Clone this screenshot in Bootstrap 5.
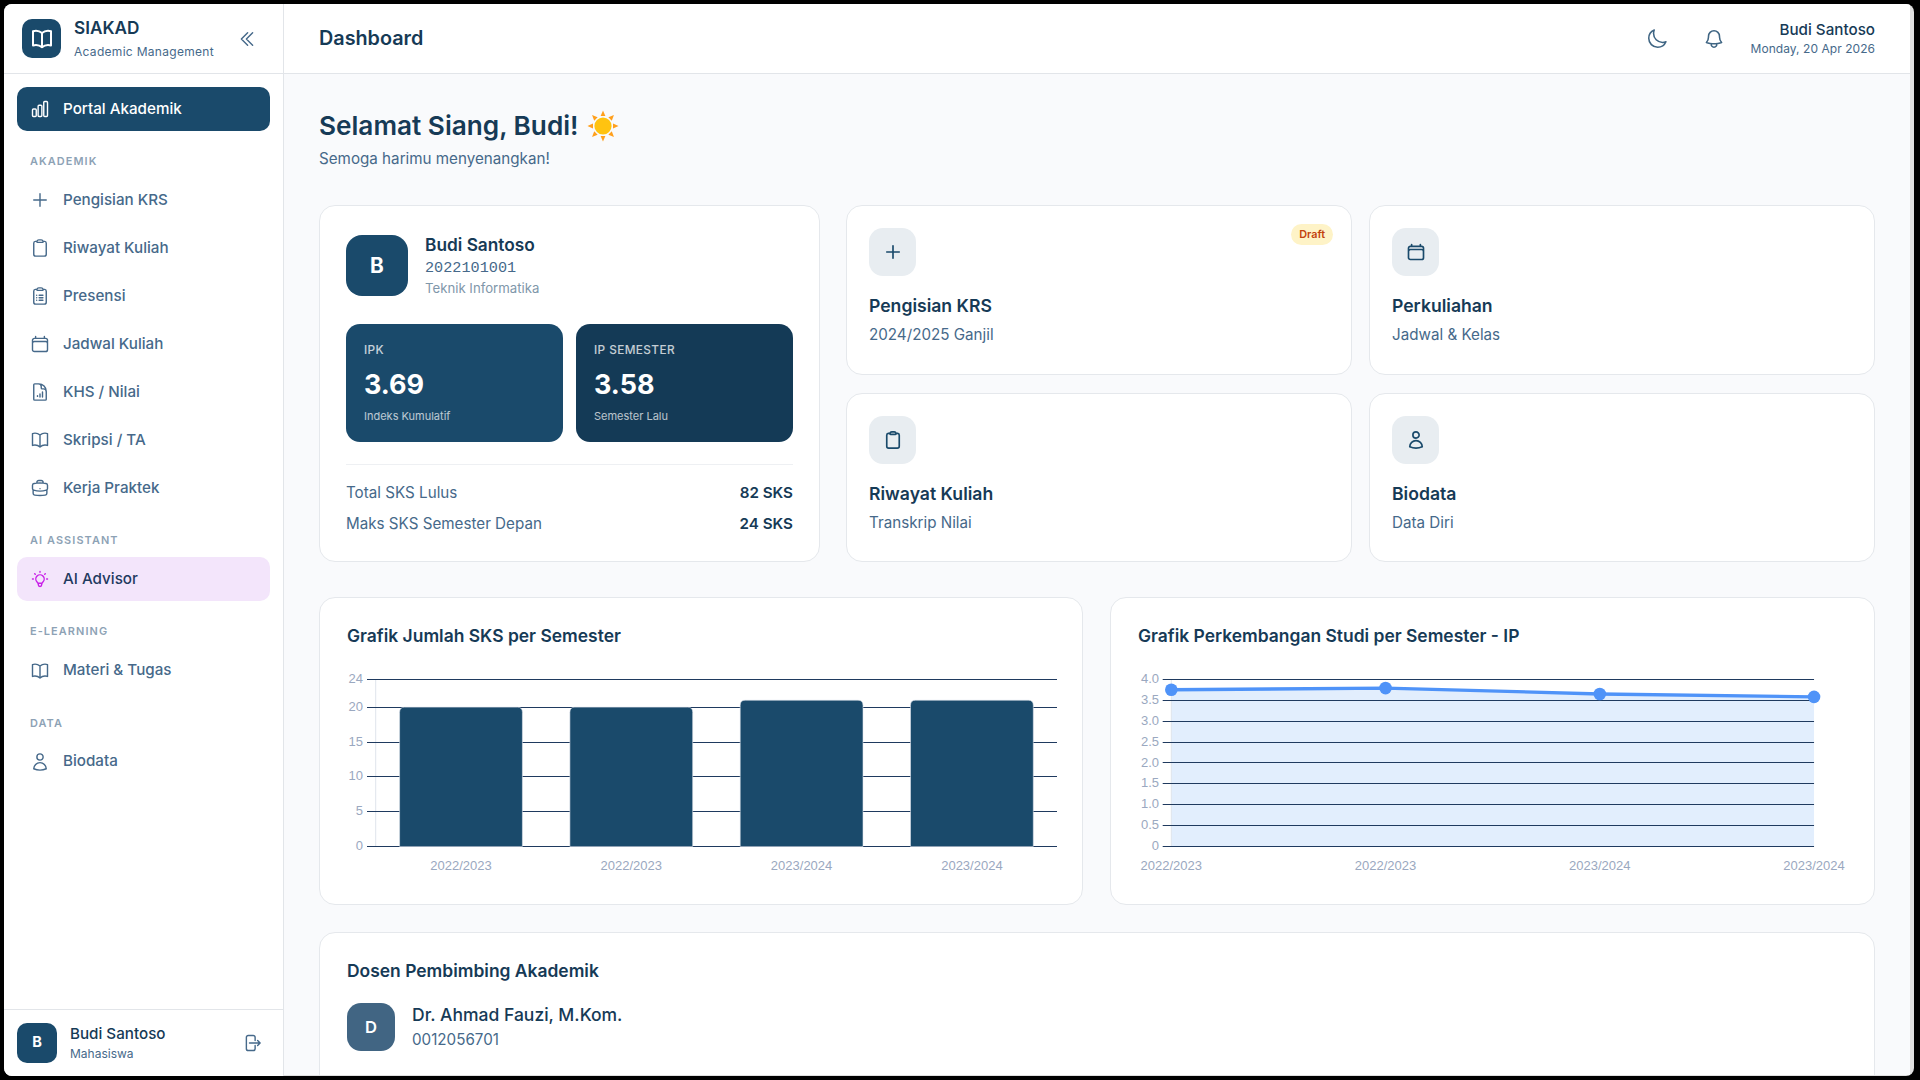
<!DOCTYPE html>
<html lang="en">
<head>
    <meta charset="UTF-8">
    <meta name="viewport" content="width=device-width, initial-scale=1.0">
    <title>SIAKAD - Dashboard</title>
    <link href="https://cdn.jsdelivr.net/npm/bootstrap@5.3.0/dist/css/bootstrap.min.css" rel="stylesheet">
    <style>
        html, body { height: 100%; }
        body {
            background: #000;
            padding: 4px;
            overflow: hidden;
            font-family: Inter, "Liberation Sans", sans-serif;
            color: #163a56;
        }
        .app-window {
            width: 1910px;
            height: 1072px;
            background: #e0e0e0;
            border-radius: 8px;
            overflow: hidden;
            padding-right: 4px;
        }
        .ico { width: 20px; height: 20px; fill: none; stroke: currentColor; stroke-width: 1.7; stroke-linecap: round; stroke-linejoin: round; flex: none; }

        /* sidebar */
        .side { width: 280px; background: #fff; border-right: 1px solid #e2e5e9; flex: none; }
        .side-brand { height: 70px; padding: 0 18px; border-bottom: 1px solid #e2e5e9; gap: 13px; }
        .logo-box { width: 39px; height: 39px; border-radius: 10px; background: #1a4a6b; color: #fff; }
        .logo-box .ico { width: 24px; height: 24px; stroke-width: 2; }
        .brand-name { font-size: 17.2px; font-weight: 600; line-height: 22px; }
        .brand-sub { font-size: 12px; line-height: 16px; color: #46698a; letter-spacing: .3px; margin-top: 5px; }
        .collapse-btn { color: #46698a; margin-left: auto; margin-right: 8px; }
        .side-nav { padding: 13px 13px 0; }
        .side-link {
            height: 44px;
            margin-bottom: 4px;
            padding: 0 13px;
            gap: 13px;
            border-radius: 10px;
            font-size: 15.2px;
            font-weight: 500;
            color: #46698a;
            text-decoration: none;
        }
        .side-link.on { background: #1a4a6b; color: #fff; }
        .side-link.ai { background: #f3e5fb; color: #1f3a5f; }
        .side-link.ai .ico { color: #c81ee8; }
        .side-label {
            padding: 17px 13px 0;
            margin-bottom: 8.2px;
            line-height: 18px;
            font-size: 10.9px;
            font-weight: 600;
            letter-spacing: 1.1px;
            color: #8da2b5;
        }
        .side-foot { height: 67px; border-top: 1px solid #e2e5e9; padding: 0 13px; gap: 13px; }
        .foot-avatar { width: 40px; height: 40px; border-radius: 10px; background: #1a4a6b; color: #fff; font-size: 14.6px; font-weight: 700; }
        .foot-name { font-size: 15.2px; font-weight: 500; line-height: 20px; }
        .foot-role { font-size: 12px; line-height: 16px; color: #46698a; margin-top: 2px; }
        .foot-out { color: #46698a; margin-left: auto; margin-right: 8px; }

        /* top bar */
        .top-bar { height: 70px; background: #fff; border-bottom: 1px solid #e2e5e9; padding: 0 35px; flex: none; }
        .top-title { font-size: 19.8px; font-weight: 600; margin: 0; }
        .top-ico { width: 22px; height: 22px; color: #3f6583; }
        .top-ico.moon-ico { margin-right: 35px; }
        .top-ico.bell-ico { margin-right: 26px; }
        .top-name { font-size: 15.2px; font-weight: 500; line-height: 20px; margin-bottom: 1px; }
        .top-date { font-size: 12px; line-height: 16px; color: #46698a; letter-spacing: .05px; }

        /* content */
        .page-body { background: #f9fafc; padding: 36px 35px 0; margin-bottom: 1px; overflow: hidden; min-height: 0; }
        .hello { font-size: 26.2px; font-weight: 600; line-height: 32px; margin: 0; gap: 8px; }
        .hello svg { width: 32px; height: 32px; flex: none; }
        .hello-sub { font-size: 15.2px; line-height: 20px; color: #46698a; margin: 7px 0 36px; }
        .panel { border: 1px solid #e5e8ec; border-radius: 16px; background: #fff; color: #163a56; }
        .top-grid { display: grid; grid-template-columns: 501px 1fr; column-gap: 26px; height: 357px; margin-bottom: 35px; }
        .quick-grid { display: grid; grid-template-columns: 1fr 1fr; gap: 18px 17px; }
        .profile-panel { padding: 28px 26px 0; }
        .profile-head { gap: 17px; }
        .big-avatar { width: 62px; height: 61px; border-radius: 16px; background: #1a4a6b; color: #fff; font-size: 20.8px; font-weight: 700; flex: none; }
        .pr-name { font-size: 17.3px; font-weight: 600; line-height: 22px; }
        .pr-nim { font-family: "Liberation Mono", monospace; font-size: 15.2px; line-height: 20px; color: #46698a; margin-top: 2px; }
        .pr-prodi { font-size: 13.2px; line-height: 18px; color: #7f97aa; margin-top: 1px; }
        .stat-row { display: grid; grid-template-columns: 1fr 1fr; gap: 13px; margin: 27px 0 22px; }
        .stat-box { height: 118px; border-radius: 14px; background: #1a4a6b; color: #fff; padding: 17px 18px; }
        .stat-box.dark { background: #143a56; }
        .stat-label { font-size: 11.8px; font-weight: 500; line-height: 18px; letter-spacing: .4px; opacity: .75; }
        .stat-value { font-size: 27px; font-weight: 700; line-height: 36px; margin-top: 8px; }
        .stat-note { font-size: 11px; line-height: 14px; opacity: .7; margin-top: 6px; }
        .sum-row { font-size: 15.2px; line-height: 20px; color: #46698a; margin-bottom: 11px; }
        .sum-row b { font-weight: 600; color: #163a56; }
        .sum-list { border-top: 1px solid #eef0f3; padding-top: 18px; }
        .quick { padding: 22px 22px 0; height: auto; }
        .quick-ico { width: 47px; height: 48px; border-radius: 14px; background: #e8edf1; color: #1a4a6b; }
        .quick-ico .ico { stroke-width: 2; }
        .quick-title { font-size: 17.6px; font-weight: 600; line-height: 24px; margin-top: 18px; }
        .quick-sub { font-size: 15.2px; line-height: 20px; color: #46698a; margin-top: 7px; }
        .draft-tag { top: 18px; right: 18px; height: 21px; padding: 0 8px; border-radius: 11px; background: #fef3c7; color: #c2410c; font-size: 10.8px; font-weight: 600; line-height: 21px; }
        .chart-grid { display: grid; grid-template-columns: 764px 1fr; column-gap: 27px; margin-bottom: 27px; }
        .chart-panel { height: 308px; padding: 26px 25px 26px 27px; }
        .panel-title { font-size: 17.45px; font-weight: 600; line-height: 24px; margin: 0 0 24px; }
        .chart-text { font-family: "Liberation Sans", Arial, sans-serif; font-size: 13px; fill: #9aa8c0; }
        .dosen-panel { padding: 26px 27px; height: 200px; }
        .dosen-panel .panel-title { margin-bottom: 20px; }
        .dosen-avatar { width: 48px; height: 48px; border-radius: 14px; background: #416583; color: #fff; font-size: 16.6px; font-weight: 600; flex: none; }
        .dosen-name { font-size: 17.5px; font-weight: 500; line-height: 22px; }
        .dosen-nip { font-size: 15.2px; line-height: 20px; color: #46698a; margin-top: 4px; }
    </style>
</head>
<body>
    <!-- icon sprite -->
    <svg width="0" height="0" class="position-absolute">
        <symbol id="i-book" viewBox="0 0 24 24"><path d="M12 6.042A8.967 8.967 0 0 0 6 3.75c-1.052 0-2.062.18-3 .512v14.25A8.987 8.987 0 0 1 6 18c2.305 0 4.408.867 6 2.292m0-14.25a8.966 8.966 0 0 1 6-2.292c1.052 0 2.062.18 3 .512v14.25A8.987 8.987 0 0 0 18 18a8.967 8.967 0 0 0-6 2.292m0-14.25v14.25"/></symbol>
        <symbol id="i-chevrons" viewBox="0 0 24 24"><path d="m18.75 4.5-7.5 7.5 7.5 7.5m-6-15L5.25 12l7.5 7.5"/></symbol>
        <symbol id="i-bars" viewBox="0 0 24 24"><path d="M3 13.125C3 12.504 3.504 12 4.125 12h2.25c.621 0 1.125.504 1.125 1.125v6.75C7.5 20.496 6.996 21 6.375 21h-2.25A1.125 1.125 0 0 1 3 19.875v-6.75ZM9.75 8.625c0-.621.504-1.125 1.125-1.125h2.25c.621 0 1.125.504 1.125 1.125v11.25c0 .621-.504 1.125-1.125 1.125h-2.25a1.125 1.125 0 0 1-1.125-1.125V8.625ZM16.5 4.125c0-.621.504-1.125 1.125-1.125h2.25C20.496 3 21 3.504 21 4.125v15.75c0 .621-.504 1.125-1.125 1.125h-2.25a1.125 1.125 0 0 1-1.125-1.125V4.125Z"/></symbol>
        <symbol id="i-plus" viewBox="0 0 24 24"><path d="M12 4.5v15m7.5-7.5h-15"/></symbol>
        <symbol id="i-clip" viewBox="0 0 24 24"><path d="M15.666 3.888A2.25 2.25 0 0 0 13.5 2.25h-3c-1.03 0-1.9.693-2.166 1.638m7.332 0c.055.194.084.4.084.612v0a.75.75 0 0 1-.75.75H9a.75.75 0 0 1-.75-.75v0c0-.212.03-.418.084-.612m7.332 0c.646.049 1.288.11 1.927.184 1.1.128 1.907 1.077 1.907 2.185V19.5a2.25 2.25 0 0 1-2.25 2.25H6.75A2.25 2.25 0 0 1 4.5 19.5V6.257c0-1.108.806-2.057 1.907-2.185a48.208 48.208 0 0 1 1.927-.184"/></symbol>
        <symbol id="i-cliplist" viewBox="0 0 24 24"><path d="M15.666 3.888A2.25 2.25 0 0 0 13.5 2.25h-3c-1.03 0-1.9.693-2.166 1.638m7.332 0c.055.194.084.4.084.612v0a.75.75 0 0 1-.75.75H9a.75.75 0 0 1-.75-.75v0c0-.212.03-.418.084-.612m7.332 0c.646.049 1.288.11 1.927.184 1.1.128 1.907 1.077 1.907 2.185V19.5a2.25 2.25 0 0 1-2.25 2.25H6.75A2.25 2.25 0 0 1 4.5 19.5V6.257c0-1.108.806-2.057 1.907-2.185a48.208 48.208 0 0 1 1.927-.184M11 11h4.5M11 14h4.5M11 17h4.5M8 11h.01M8 14h.01M8 17h.01"/></symbol>
        <symbol id="i-cal" viewBox="0 0 24 24"><path d="M6.75 3v2.25M17.25 3v2.25M3 18.75V7.5a2.25 2.25 0 0 1 2.25-2.25h13.5A2.25 2.25 0 0 1 21 7.5v11.25m-18 0A2.25 2.25 0 0 0 5.25 21h13.5A2.25 2.25 0 0 0 21 18.75m-18 0v-7.5A2.25 2.25 0 0 1 5.25 9h13.5A2.25 2.25 0 0 1 21 11.25v7.5"/></symbol>
        <symbol id="i-doc" viewBox="0 0 24 24"><path d="M19.5 14.25v-2.625a3.375 3.375 0 0 0-3.375-3.375h-1.5A1.125 1.125 0 0 1 13.5 7.125v-1.5a3.375 3.375 0 0 0-3.375-3.375H8.25M9 16.5v.75m3-3v3.75m3-6v6M10.5 2.25H5.625c-.621 0-1.125.504-1.125 1.125v17.25c0 .621.504 1.125 1.125 1.125h12.75c.621 0 1.125-.504 1.125-1.125V11.25a9 9 0 0 0-9-9Z"/></symbol>
        <symbol id="i-case" viewBox="0 0 24 24"><path d="M20.25 14.15v4.25c0 1.094-.787 2.036-1.872 2.18-2.087.277-4.216.42-6.378.42s-4.291-.143-6.378-.42c-1.085-.144-1.872-1.086-1.872-2.18v-4.25m16.5 0a2.18 2.18 0 0 0 .75-1.661V8.706c0-1.081-.768-2.015-1.837-2.175a48.114 48.114 0 0 0-3.413-.387m4.5 8.006c-.194.165-.42.295-.673.38A23.978 23.978 0 0 1 12 15.75c-2.648 0-5.195-.429-7.577-1.22a2.016 2.016 0 0 1-.673-.38m0 0A2.18 2.18 0 0 1 3 12.489V8.706c0-1.081.768-2.015 1.837-2.175a48.111 48.111 0 0 1 3.413-.387m7.5 0V5.25A2.25 2.25 0 0 0 13.5 3h-3a2.25 2.25 0 0 0-2.25 2.25v.894m7.5 0a48.667 48.667 0 0 0-7.5 0M12 12.75h.008v.008H12v-.008Z"/></symbol>
        <symbol id="i-bulb" viewBox="0 0 24 24"><path d="M9.663 17h4.673M12 3v1m6.364 1.636l-.707.707M21 12h-1M4 12H3m3.343-5.657l-.707-.707m2.828 9.9a5 5 0 117.072 0l-.548.547A3.374 3.374 0 0014 18.469V19a2 2 0 11-4 0v-.531c0-.895-.356-1.754-.988-2.386l-.548-.547z"/></symbol>
        <symbol id="i-user" viewBox="0 0 24 24"><path d="M15.75 6a3.75 3.75 0 1 1-7.5 0 3.75 3.75 0 0 1 7.5 0ZM4.501 20.118a7.5 7.5 0 0 1 14.998 0A17.933 17.933 0 0 1 12 21.75c-2.676 0-5.216-.584-7.499-1.632Z"/></symbol>
        <symbol id="i-out" viewBox="0 0 24 24"><path d="M15.75 9V5.25A2.25 2.25 0 0 0 13.5 3h-6a2.25 2.25 0 0 0-2.25 2.25v13.5A2.25 2.25 0 0 0 7.5 21h6a2.25 2.25 0 0 0 2.25-2.25V15m3 0 3-3m0 0-3-3m3 3H9"/></symbol>
        <symbol id="i-moon" viewBox="0 0 24 24"><path d="M21.752 15.002A9.72 9.72 0 0 1 18 15.75c-5.385 0-9.75-4.365-9.75-9.75 0-1.33.266-2.597.748-3.752A9.753 9.753 0 0 0 3 11.25C3 16.635 7.365 21 12.75 21a9.753 9.753 0 0 0 9.002-5.998Z"/></symbol>
        <symbol id="i-bell" viewBox="0 0 24 24"><path d="M14.857 17.082a23.848 23.848 0 0 0 5.454-1.31A8.967 8.967 0 0 1 18 9.75V9A6 6 0 0 0 6 9v.75a8.967 8.967 0 0 1-2.312 6.022c1.733.64 3.56 1.085 5.455 1.31m5.714 0a24.255 24.255 0 0 1-5.714 0m5.714 0a3 3 0 1 1-5.714 0"/></symbol>
    </svg>

    <div class="app-window d-flex">
        <aside class="side d-flex flex-column">
            <div class="side-brand d-flex align-items-center">
                <div class="logo-box d-flex align-items-center justify-content-center"><svg class="ico"><use href="#i-book"/></svg></div>
                <div>
                    <div class="brand-name">SIAKAD</div>
                    <div class="brand-sub">Academic Management</div>
                </div>
                <svg class="ico collapse-btn"><use href="#i-chevrons"/></svg>
            </div>
            <nav class="side-nav flex-grow-1">
                <a class="side-link on d-flex align-items-center" href="#"><svg class="ico"><use href="#i-bars"/></svg>Portal Akademik</a>
                <div class="side-label">AKADEMIK</div>
                <a class="side-link d-flex align-items-center" href="#"><svg class="ico"><use href="#i-plus"/></svg>Pengisian KRS</a>
                <a class="side-link d-flex align-items-center" href="#"><svg class="ico"><use href="#i-clip"/></svg>Riwayat Kuliah</a>
                <a class="side-link d-flex align-items-center" href="#"><svg class="ico"><use href="#i-cliplist"/></svg>Presensi</a>
                <a class="side-link d-flex align-items-center" href="#"><svg class="ico"><use href="#i-cal"/></svg>Jadwal Kuliah</a>
                <a class="side-link d-flex align-items-center" href="#"><svg class="ico"><use href="#i-doc"/></svg>KHS / Nilai</a>
                <a class="side-link d-flex align-items-center" href="#"><svg class="ico"><use href="#i-book"/></svg>Skripsi / TA</a>
                <a class="side-link d-flex align-items-center" href="#"><svg class="ico"><use href="#i-case"/></svg>Kerja Praktek</a>
                <div class="side-label">AI ASSISTANT</div>
                <a class="side-link ai d-flex align-items-center" href="#"><svg class="ico"><use href="#i-bulb"/></svg>AI Advisor</a>
                <div class="side-label">E-LEARNING</div>
                <a class="side-link d-flex align-items-center" href="#"><svg class="ico"><use href="#i-book"/></svg>Materi &amp; Tugas</a>
                <div class="side-label">DATA</div>
                <a class="side-link d-flex align-items-center" href="#"><svg class="ico"><use href="#i-user"/></svg>Biodata</a>
            </nav>
            <div class="side-foot d-flex align-items-center">
                <div class="foot-avatar d-flex align-items-center justify-content-center">B</div>
                <div>
                    <div class="foot-name">Budi Santoso</div>
                    <div class="foot-role">Mahasiswa</div>
                </div>
                <svg class="ico foot-out"><use href="#i-out"/></svg>
            </div>
        </aside>

        <div class="flex-grow-1 d-flex flex-column" style="min-width:0">
            <header class="top-bar d-flex align-items-center justify-content-between">
                <h1 class="top-title">Dashboard</h1>
                <div class="d-flex align-items-center">
                    <svg class="ico top-ico moon-ico"><use href="#i-moon"/></svg>
                    <svg class="ico top-ico bell-ico"><use href="#i-bell"/></svg>
                    <div class="text-end">
                        <div class="top-name">Budi Santoso</div>
                        <div class="top-date">Monday, 20 Apr 2026</div>
                    </div>
                </div>
            </header>

            <main class="page-body flex-grow-1">
                <h2 class="hello d-flex align-items-center">Selamat Siang, Budi!
                    <svg viewBox="0 0 32 32" aria-hidden="true">
                        <g fill="#ff9f1c">
                            <polygon id="sun-ray" points="13.6,6 18.4,6 16,0.5"/>
                            <use href="#sun-ray" transform="rotate(45 16 16)"/>
                            <use href="#sun-ray" transform="rotate(90 16 16)"/>
                            <use href="#sun-ray" transform="rotate(135 16 16)"/>
                            <use href="#sun-ray" transform="rotate(180 16 16)"/>
                            <use href="#sun-ray" transform="rotate(225 16 16)"/>
                            <use href="#sun-ray" transform="rotate(270 16 16)"/>
                            <use href="#sun-ray" transform="rotate(315 16 16)"/>
                        </g>
                        <circle cx="16" cy="16" r="8.6" fill="#ffc310"/>
                    </svg>
                </h2>
                <p class="hello-sub">Semoga harimu menyenangkan!</p>

                <div class="top-grid">
                    <section class="panel profile-panel">
                        <div class="profile-head d-flex align-items-center">
                            <div class="big-avatar d-flex align-items-center justify-content-center">B</div>
                            <div>
                                <div class="pr-name">Budi Santoso</div>
                                <div class="pr-nim">2022101001</div>
                                <div class="pr-prodi">Teknik Informatika</div>
                            </div>
                        </div>
                        <div class="stat-row">
                            <div class="stat-box">
                                <div class="stat-label">IPK</div>
                                <div class="stat-value">3.69</div>
                                <div class="stat-note">Indeks Kumulatif</div>
                            </div>
                            <div class="stat-box dark">
                                <div class="stat-label">IP SEMESTER</div>
                                <div class="stat-value">3.58</div>
                                <div class="stat-note">Semester Lalu</div>
                            </div>
                        </div>
                        <div class="sum-list">
                            <div class="sum-row d-flex justify-content-between"><span>Total SKS Lulus</span><b>82 SKS</b></div>
                            <div class="sum-row d-flex justify-content-between"><span>Maks SKS Semester Depan</span><b>24 SKS</b></div>
                        </div>
                    </section>

                    <div class="quick-grid">
                        <a class="panel quick position-relative d-block text-decoration-none" href="#">
                            <span class="draft-tag position-absolute">Draft</span>
                            <div class="quick-ico d-flex align-items-center justify-content-center"><svg class="ico"><use href="#i-plus"/></svg></div>
                            <div class="quick-title">Pengisian KRS</div>
                            <div class="quick-sub">2024/2025 Ganjil</div>
                        </a>
                        <a class="panel quick d-block text-decoration-none" href="#">
                            <div class="quick-ico d-flex align-items-center justify-content-center"><svg class="ico"><use href="#i-cal"/></svg></div>
                            <div class="quick-title">Perkuliahan</div>
                            <div class="quick-sub">Jadwal &amp; Kelas</div>
                        </a>
                        <a class="panel quick d-block text-decoration-none" href="#">
                            <div class="quick-ico d-flex align-items-center justify-content-center"><svg class="ico"><use href="#i-clip"/></svg></div>
                            <div class="quick-title">Riwayat Kuliah</div>
                            <div class="quick-sub">Transkrip Nilai</div>
                        </a>
                        <a class="panel quick d-block text-decoration-none" href="#">
                            <div class="quick-ico d-flex align-items-center justify-content-center"><svg class="ico"><use href="#i-user"/></svg></div>
                            <div class="quick-title">Biodata</div>
                            <div class="quick-sub">Data Diri</div>
                        </a>
                    </div>
                </div>

                <div class="chart-grid">
                    <section class="panel chart-panel">
                        <h3 class="panel-title">Grafik Jumlah SKS per Semester</h3>
                        <svg id="sksChart" class="d-block" width="710" height="206"></svg>
                    </section>
                    <section class="panel chart-panel">
                        <h3 class="panel-title">Grafik Perkembangan Studi per Semester - IP</h3>
                        <svg id="ipChart" class="d-block" width="710" height="206"></svg>
                    </section>
                </div>

                <section class="panel dosen-panel">
                    <h3 class="panel-title">Dosen Pembimbing Akademik</h3>
                    <div class="d-flex align-items-center" style="gap:17px">
                        <div class="dosen-avatar d-flex align-items-center justify-content-center">D</div>
                        <div>
                            <div class="dosen-name">Dr. Ahmad Fauzi, M.Kom.</div>
                            <div class="dosen-nip">0012056701</div>
                        </div>
                    </div>
                </section>
            </main>
        </div>
    </div>

    <script src="https://cdn.jsdelivr.net/npm/bootstrap@5.3.0/dist/js/bootstrap.bundle.min.js"></script>
    <script>
        const gridColor = '#1f3a5f';
        const plotTop = 7.3, plotBottom = 174.5;

        function yAxis(ticks, max, left, right, tickLeft, labelEnd, fmt) {
            let out = `<line x1="${left}" x2="${left}" y1="${plotTop}" y2="${plotBottom}" stroke="#dfe4ec"/>`;
            ticks.forEach(t => {
                const y = plotBottom - (t / max) * (plotBottom - plotTop);
                const lineY = Math.floor(y) + .5;
                out += `<line x1="${tickLeft}" x2="${right}" y1="${lineY}" y2="${lineY}" stroke="${gridColor}" stroke-width="1"/>`;
                out += `<text class="chart-text" x="${labelEnd}" y="${y + 3.6}" text-anchor="end">${fmt(t)}</text>`;
            });
            return out;
        }

        // SKS per semester
        const sks = [
            { label: '2022/2023', value: 20 },
            { label: '2022/2023', value: 20 },
            { label: '2023/2024', value: 21 },
            { label: '2023/2024', value: 21 }
        ];
        let barSvg = yAxis([0, 5, 10, 15, 20, 24], 24, 28.7, 710, 20, 16, t => t);
        sks.forEach((s, i) => {
            const cx = 114 + i * 170.3, h = (s.value / 24) * (plotBottom - plotTop), x = cx - 61.4, top = plotBottom - h;
            barSvg += `<path d="M${x} ${plotBottom}V${top + 5}q0-5 5-5H${x + 117.8}q5 0 5 5V${plotBottom}Z" fill="#1a4a6b" stroke="#dfe4ec" stroke-width=".6"/>`;
            barSvg += `<text class="chart-text" x="${cx}" y="198" text-anchor="middle">${s.label}</text>`;
        });
        document.getElementById('sksChart').innerHTML = barSvg;

        // IP per semester
        const ip = [
            { label: '2022/2023', value: 3.75 },
            { label: '2022/2023', value: 3.79 },
            { label: '2023/2024', value: 3.65 },
            { label: '2023/2024', value: 3.58 }
        ];
        const ipX = i => 33.3 + i * 214.25;
        const ipY = v => plotBottom - (v / 4) * (plotBottom - plotTop);
        const linePts = ip.map((p, i) => `${ipX(i)},${ipY(p.value)}`).join(' ');
        let lineSvg = `<polygon points="${ipX(0)},${plotBottom} ${linePts} ${ipX(3)},${plotBottom}" fill="#e2eefd"/>`;
        lineSvg += yAxis([0, 0.5, 1, 1.5, 2, 2.5, 3, 3.5, 4], 4, 33.3, ipX(3), 24.7, 21, t => t === 0 ? '0' : t.toFixed(1));
        lineSvg += `<polyline points="${linePts}" fill="none" stroke="#4f93f8" stroke-width="3.4"/>`;
        ip.forEach((p, i) => {
            lineSvg += `<circle cx="${ipX(i)}" cy="${ipY(p.value)}" r="6.3" fill="#4f93f8"/>`;
            lineSvg += `<text class="chart-text" x="${ipX(i)}" y="198" text-anchor="middle">${p.label}</text>`;
        });
        document.getElementById('ipChart').innerHTML = lineSvg;
    </script>
</body>
</html>
